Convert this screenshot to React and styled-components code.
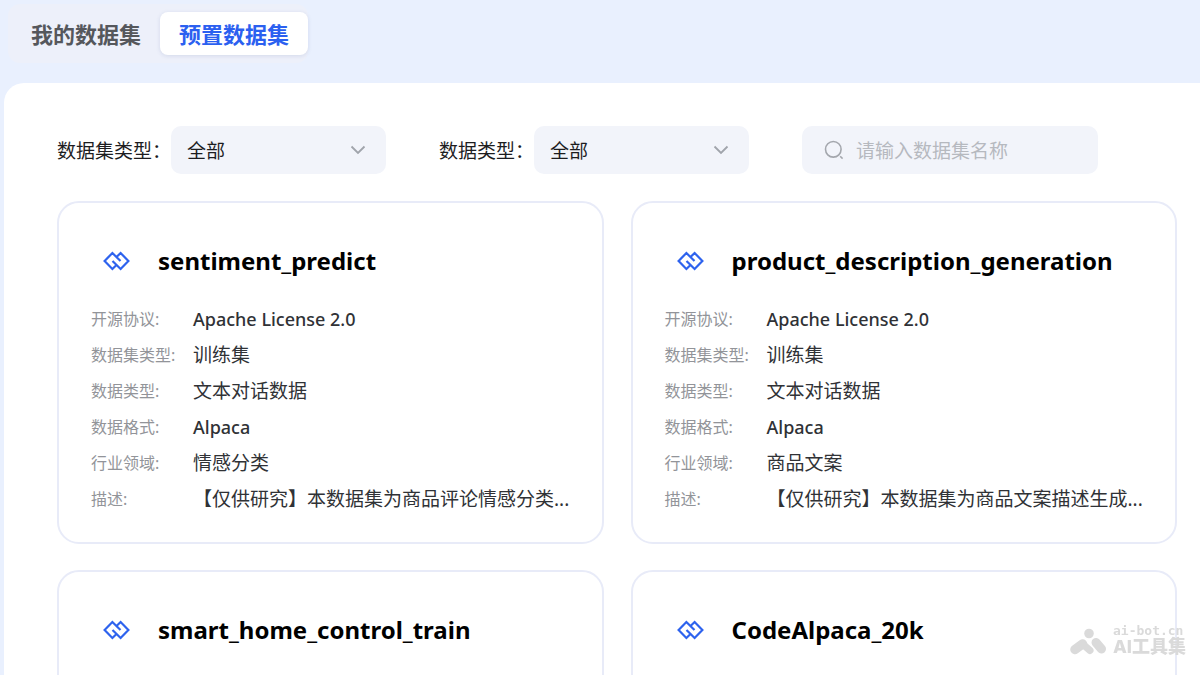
import React from "react";
import styled, { createGlobalStyle } from "styled-components";

const GlobalStyle = createGlobalStyle`
  *, *::before, *::after { box-sizing: border-box; }
  body {
    margin: 0;
    background: #e9f0fe;
    color: #1d1d1f;
    font-family: "Noto Sans", "Noto Sans CJK SC", sans-serif;
  }
  button, input, select { font: inherit; color: inherit; }
`;

const Page = styled.div`
  display: flex;
  flex-direction: column;
  height: 100vh;
  overflow: hidden;
  padding-left: 4px;
`;

const TabBar = styled.nav`
  align-self: flex-start;
  display: flex;
  margin: 4px 0 20px 4px;
  padding: 8px 0 8px 4px;
  border-radius: 12px;
  background: #edf0fa;
`;

const Tab = styled.button`
  height: 43px;
  padding: 0 19px;
  border: 0;
  border-radius: 8px;
  background: ${(p) => (p.$active ? "#fff" : "transparent")};
  box-shadow: ${(p) => (p.$active ? "0 1px 4px rgba(60, 80, 140, 0.14)" : "none")};
  color: ${(p) => (p.$active ? "#2b60f0" : "#55575c")};
  font-size: 22px;
  font-weight: 700;
  line-height: 32px;
`;

const Panel = styled.main`
  flex: 1;
  min-height: 0;
  padding: 43px 23px 0 53px;
  border-top-left-radius: 20px;
  background: #fff;
  overflow: hidden;
`;

const Filters = styled.form`
  display: flex;
  align-items: center;
  gap: 53px;
  margin-bottom: 27px;
`;

const Filter = styled.label`
  display: flex;
  align-items: center;
  font-size: 19px;
  white-space: nowrap;
`;

const SelectBox = styled.span`
  display: grid;
  align-items: center;
  width: 215px;
  height: 48px;
  border-radius: 10px;
  background: #f2f4fa;
  > * { grid-area: 1 / 1; }
  > svg { justify-self: end; margin-right: 20px; pointer-events: none; }
`;

const Select = styled.select`
  appearance: none;
  width: 100%;
  height: 100%;
  padding: 2px 16px 0;
  border: 0;
  background: transparent;
`;

const Search = styled.label`
  display: flex;
  align-items: center;
  gap: 12px;
  width: 296px;
  height: 48px;
  padding: 0 22px;
  border-radius: 10px;
  background: #f2f4fa;
`;

const SearchInput = styled.input`
  flex: 1;
  min-width: 0;
  padding: 2px 0 0;
  border: 0;
  background: transparent;
  font-size: 19px;
  &::placeholder { color: #b6b9bf; opacity: 1; }
`;

const CardGrid = styled.div`
  display: grid;
  grid-template-columns: repeat(2, minmax(0, 1fr));
  gap: 26px 27px;
`;

const Card = styled.article`
  min-height: 343px;
  padding: 36px 32px 24px;
  border: 2px solid #e8ebf8;
  border-radius: 22px;
`;

const CardHead = styled.header`
  display: flex;
  align-items: center;
  gap: 28px;
  margin-bottom: 18px;
  padding-left: 12px;
`;

const Title = styled.h2`
  margin: 0;
  color: #000;
  font-size: 24px;
  font-weight: 700;
  line-height: 44px;
`;

const Details = styled.dl`
  display: grid;
  grid-template-columns: 102px minmax(0, 1fr);
  grid-auto-rows: 36px;
  align-items: center;
  margin: 0;
`;

const Term = styled.dt`
  color: #929499;
  font-size: 16px;
  line-height: 24px;
  white-space: nowrap;
`;

const Value = styled.dd`
  margin: 0;
  color: #303236;
  font-size: ${(p) => (p.$latin ? "18px" : "19px")};
  font-weight: ${(p) => (p.$latin ? 500 : 400)};
  line-height: 28px;
  white-space: nowrap;
`;

const Watermark = styled.aside`
  position: fixed;
  right: 14px;
  bottom: 18px;
  display: flex;
  align-items: center;
  gap: 6px;
  color: #dadada;
  font-weight: 800;
  pointer-events: none;
`;

const WatermarkText = styled.span`
  display: flex;
  flex-direction: column;
  font-family: Inter, "Noto Sans CJK SC", sans-serif;
  font-size: 18px;
  line-height: 20px;
`;

const WatermarkSite = styled.span`
  font-family: "DejaVu Sans Mono", monospace;
  font-size: 13px;
  line-height: 12px;
  font-weight: 700;
`;

const DatasetIcon = () => (
  <svg width="27" height="20" viewBox="0 0 27 20" fill="none" stroke="#2e63ee" strokeWidth="2.2" aria-hidden="true">
    <path d="M9.5 10 17.6 18 25.4 10 17.6 2 13.5 6" />
    <path d="M17.5 10 9.4 2 1.6 10 9.4 18 13.5 14" />
  </svg>
);

const Chevron = () => (
  <svg width="16" height="10" viewBox="0 0 16 10" fill="none" stroke="#a0a4ab" strokeWidth="1.8" aria-hidden="true">
    <path d="M1.5 1.5 8 8l6.5-6.5" />
  </svg>
);

const SearchIcon = () => (
  <svg width="20" height="20" viewBox="0 0 20 20" fill="none" stroke="#a4a7ad" strokeWidth="1.6" aria-hidden="true">
    <circle cx="9.3" cy="9.3" r="7.8" />
    <path d="m16.2 16.2 2.4 2.4" />
  </svg>
);

const WatermarkLogo = () => (
  <svg width="37" height="27" viewBox="0 0 37 27" fill="none" stroke="currentColor" strokeLinecap="round" strokeLinejoin="round" aria-hidden="true">
    <circle cx="19" cy="5.5" r="4.8" fill="currentColor" stroke="none" />
    <path d="M5 21.5 12.5 16" strokeWidth="9.5" />
    <path d="M12 15.5 20 22.5" strokeWidth="7" />
    <path d="M26 14.5 31.5 21" strokeWidth="9" />
  </svg>
);

const SelectFilter = ({ label }) => (
  <Filter>
    {label}
    <SelectBox>
      <Select defaultValue="全部">
        <option>全部</option>
      </Select>
      <Chevron />
    </SelectBox>
  </Filter>
);

const isLatin = (text) => /^[\x20-\x7e]+$/.test(text);

const common = [
  ["开源协议", "Apache License 2.0"],
  ["数据集类型", "训练集"],
  ["数据类型", "文本对话数据"],
  ["数据格式", "Alpaca"],
];

const datasets = [
  {
    name: "sentiment_predict",
    details: [...common, ["行业领域", "情感分类"], ["描述", "【仅供研究】本数据集为商品评论情感分类..."]],
  },
  {
    name: "product_description_generation",
    details: [...common, ["行业领域", "商品文案"], ["描述", "【仅供研究】本数据集为商品文案描述生成..."]],
  },
  { name: "smart_home_control_train", details: [] },
  { name: "CodeAlpaca_20k", details: [] },
];

export default function App() {
  return (
    <>
      <GlobalStyle />
      <Page>
        <TabBar>
          <Tab type="button">我的数据集</Tab>
          <Tab type="button" $active>预置数据集</Tab>
        </TabBar>
        <Panel>
          <Filters>
            <SelectFilter label="数据集类型：" />
            <SelectFilter label="数据类型：" />
            <Search>
              <SearchIcon />
              <SearchInput type="search" aria-label="数据集名称" placeholder="请输入数据集名称" />
            </Search>
          </Filters>
          <CardGrid>
            {datasets.map(({ name, details }) => (
              <Card key={name}>
                <CardHead>
                  <DatasetIcon />
                  <Title>{name}</Title>
                </CardHead>
                {details.length > 0 && (
                  <Details>
                    {details.map(([term, value]) => (
                      <React.Fragment key={term}>
                        <Term>{term}:</Term>
                        <Value $latin={isLatin(value)}>{value}</Value>
                      </React.Fragment>
                    ))}
                  </Details>
                )}
              </Card>
            ))}
          </CardGrid>
        </Panel>
        <Watermark>
          <WatermarkLogo />
          <WatermarkText>
            <WatermarkSite>ai-bot.cn</WatermarkSite>
            AI工具集
          </WatermarkText>
        </Watermark>
      </Page>
    </>
  );
}
